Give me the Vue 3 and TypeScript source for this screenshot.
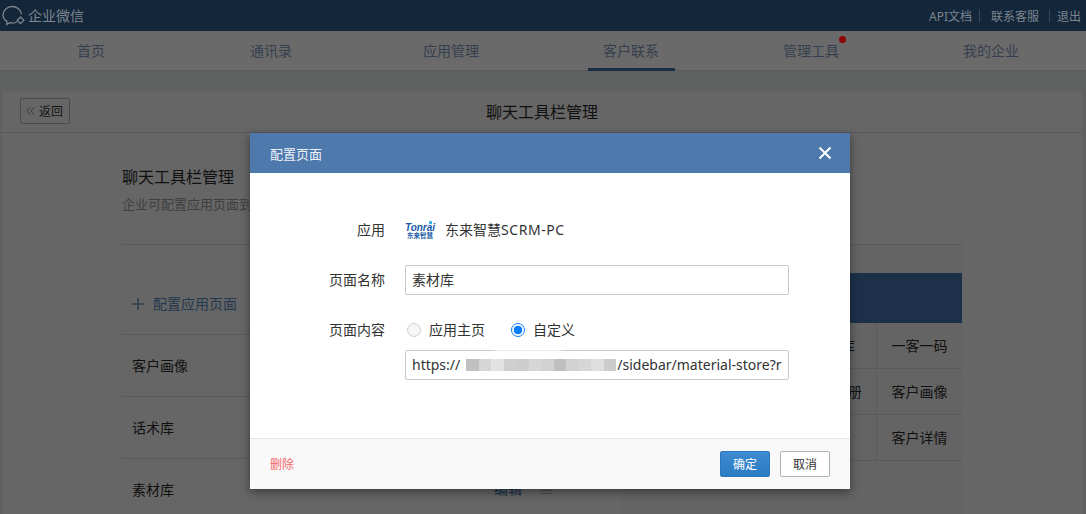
<script setup lang="ts">
const tabs: { name: string; active?: boolean; dot?: boolean }[] = [
  { name: '首页' },
  { name: '通讯录' },
  { name: '应用管理' },
  { name: '客户联系', active: true },
  { name: '管理工具', dot: true },
  { name: '我的企业' },
]
const rows: { name: string; edit?: boolean }[] = [
  { name: '客户画像' },
  { name: '话术库' },
  { name: '素材库', edit: true },
]
const cells: string[] = ['', '', '素材库', '一客一码', '', '', '产品图册', '客户画像', '', '', '', '客户详情']
const blocks: string[] = ['#c0c0c0', '#d6d6d6', '#e2e2e2', '#cfcfcf', '#cdcdcd', '#d6d6d6', '#d2d2d2', '#c0c0c0', '#d2d2d2', '#d6d6d6', '#dedede', '#cccccc']
</script>

<template>
  <div class="page">
    <header class="topbar">
      <div class="brand">
        <svg class="brand-icon" width="24" height="22" viewBox="0 0 24 22" fill="none" stroke="#7d8790" stroke-width="1.3">
          <path d="M15.300 16.700C13.800 17.600 12 18.100 10.200 18.100c-.9 0-1.800-.1-2.600-.4L4.700 19.600l.2-3.200C2.500 14.900 1 12.500 1 9.800 1 5.200 5.100 1.500 10.200 1.500c4.800 0 8.800 3.300 9.200 7.600" />
          <path d="M18.500 12l3.300 3.300-3.300 3.300-3.300-3.300z" />
        </svg>
        <span>企业微信</span>
      </div>
      <nav class="toplinks">
        <a>API文档</a><i></i><a>联系客服</a><i></i><a>退出</a>
      </nav>
    </header>

    <nav class="tabs">
      <div v-for="t in tabs" :key="t.name" class="tab" :class="{ active: t.active }">
        <span class="tab-label">{{ t.name }}<b v-if="t.dot" class="dot"></b></span>
      </div>
    </nav>

    <main class="card">
      <div class="card-head">
        <button class="back">
          <svg width="10" height="10" viewBox="0 0 10 10" fill="none" stroke="#3e3e3e" stroke-width="1">
            <path d="M4.500 1 1 5l3.500 4M8.500 1 5 5l3.500 4" />
          </svg>
          <span>返回</span>
        </button>
        <h1>聊天工具栏管理</h1>
      </div>
      <div class="content">
        <h2>聊天工具栏管理</h2>
        <p>企业可配置应用页面到聊天工具栏</p>
        <div class="columns">
          <section class="list">
            <div class="add">
              <svg width="12" height="12" viewBox="0 0 12 12" stroke="#2f3f52" stroke-width="1.600">
                <path d="M6 0v12M0 6h12" />
              </svg>
              <span>配置应用页面</span>
            </div>
            <div v-for="r in rows" :key="r.name" class="row">
              <span>{{ r.name }}</span>
              <span v-if="r.edit" class="row-tools">
                <span class="edit">编辑</span>
                <span class="handle"></span>
              </span>
            </div>
          </section>
          <section class="phone">
            <div class="phone-head"></div>
            <div class="grid">
              <div v-for="(c, i) in cells" :key="i" class="cell">{{ c }}</div>
            </div>
          </section>
        </div>
      </div>
    </main>

    <div class="modal">
      <div class="modal-head">
        <span>配置页面</span>
        <svg width="14" height="14" viewBox="0 0 14 14" stroke="#fff" stroke-width="2">
          <path d="M1.500 1.500l11 11M12.500 1.500l-11 11" />
        </svg>
      </div>
      <div class="modal-body">
        <div class="form-row">
          <label>应用</label>
          <div class="app">
            <div class="app-logo">
              <span class="logo-spark"></span>
              <span class="logo-en">Tonrai</span>
              <span class="logo-cn">东来智慧</span>
            </div>
            <span>东来智慧<span class="latin">SCRM-PC</span></span>
          </div>
        </div>
        <div class="form-row">
          <label>页面名称</label>
          <div class="input">素材库</div>
        </div>
        <div class="form-row content-row">
          <label>页面内容</label>
          <div class="field">
            <div class="radios">
              <label class="radio"><input type="radio" name="kind" /><span>应用主页</span></label>
              <label class="radio"><input type="radio" name="kind" checked /><span>自定义</span></label>
            </div>
            <div class="url-wrap">
              <div class="input url">
                <span>https://</span>
                <span class="mask">
                  <em v-for="(b, i) in blocks" :key="i" :style="{ background: b }"></em>
                </span>
                <span>/sidebar/material-store?r</span>
              </div>
              <span class="halo"></span>
            </div>
          </div>
        </div>
      </div>
      <div class="modal-foot">
        <a class="danger">删除</a>
        <div class="actions">
          <button class="btn primary">确定</button>
          <button class="btn">取消</button>
        </div>
      </div>
    </div>
  </div>
</template>

<style>
html, body { margin: 0; background: #5f6161; }
</style>

<style scoped>
.page {
  position: relative;
  width: 1086px;
  height: 514px;
  overflow: hidden;
  background: #5f6161;
  font-family: "Noto Sans", "Noto Sans CJK SC", sans-serif;
  font-size: 14px;
  color: #333;
}
.topbar {
  height: 31px;
  background: #14263a;
  display: flex;
  align-items: center;
  justify-content: space-between;
  padding: 0 5px 0 2px;
  box-sizing: border-box;
  color: #7c858e;
}
.brand { display: flex; align-items: center; gap: 2px; font-size: 14px; line-height: 20px; }
.brand-icon { flex: none; }
.toplinks { display: flex; align-items: center; font-size: 12px; }
.toplinks i { width: 1px; height: 13px; background: #3b4653; margin: 0 7px 0 7px; }
.toplinks i:nth-of-type(1) { margin-right: 11px; }
.toplinks i:nth-of-type(2) { margin-left: 10px; }
.tabs {
  height: 40px;
  display: flex;
  padding-left: 1px;
  background: #6a6a6a;
  border-bottom: 1px solid #5a5a5a;
  box-sizing: border-box;
}
.tab {
  width: 180px;
  flex: none;
  display: flex;
  justify-content: center;
  align-items: center;
  color: #363f4e;
  position: relative;
}
.tab.active::after {
  content: "";
  position: absolute;
  left: 47px;
  width: 87px;
  bottom: -1px;
  height: 3px;
  background: #1a2c46;
}
.tab-label { position: relative; line-height: 20px; }
.dot {
  position: absolute;
  right: -7px;
  top: -5px;
  width: 7px;
  height: 7px;
  border-radius: 50%;
  background: #8e0606;
}
.card {
  margin: 20px 4px 0 2px;
  height: 423px;
  background: #666;
  border-top: 1px solid #626363;
  box-sizing: border-box;
}
.card-head {
  height: 41px;
  border-bottom: 1px solid #585858;
  box-sizing: border-box;
  position: relative;
  display: flex;
  align-items: center;
  justify-content: center;
}
.card-head h1 {
  margin: 0;
  font-size: 16px;
  font-weight: 400;
  color: #111;
  line-height: 24px;
}
.back {
  position: absolute;
  left: 18px;
  top: 6px;
  width: 50px;
  height: 26px;
  padding: 0 0 0 5px;
  box-sizing: border-box;
  display: flex;
  align-items: center;
  gap: 3px;
  background: transparent;
  border: 1px solid #4c4c4c;
  border-radius: 2px;
  font: inherit;
  font-size: 12px;
  color: #141414;
}
.content { padding: 34px 120px 0; }
.content h2 {
  margin: 0;
  font-size: 16px;
  font-weight: 400;
  line-height: 20px;
  color: #111;
}
.content p {
  margin: 7px 0 0;
  font-size: 13px;
  line-height: 20px;
  color: #3f3f3f;
  padding-bottom: 30px;
  border-bottom: 1px solid #5a5a5a;
}
.columns { display: flex; }
.list { width: 500px; flex: none; }
.add {
  height: 90px;
  box-sizing: border-box;
  padding: 0 0 16px 10px;
  display: flex;
  align-items: flex-end;
  gap: 9px;
  border-bottom: 1px solid #5a5a5a;
  color: #24384e;
  line-height: 28px;
}
.add svg { margin-bottom: 8px; }
.row {
  height: 62px;
  padding: 0 70px 2px 10px;
  box-sizing: border-box;
  display: flex;
  align-items: center;
  justify-content: space-between;
  border-bottom: 1px solid #5a5a5a;
  color: #111;
}
.row-tools { display: flex; align-items: center; gap: 18px; }
.edit { color: #16304d; margin-bottom: 2px; }
.handle {
  width: 12px;
  height: 2px;
  margin-top: 6px;
  border-top: 1px solid #505050;
  border-bottom: 1px solid #505050;
}
.phone { width: 340px; flex: none; background: #646464; padding-top: 28px; }
.phone-head { height: 50px; background: #1d304a; }
.grid { display: grid; grid-template-columns: repeat(4, 85px); grid-auto-rows: 46px; }
.cell {
  display: flex;
  align-items: center;
  justify-content: center;
  padding-bottom: 2px;
  border-bottom: 1px solid #5a5a5a;
  border-right: 1px solid #5a5a5a;
  box-sizing: border-box;
  color: #111;
}
.cell:nth-child(4n) { border-right: 0; }

.modal {
  position: absolute;
  left: 250px;
  top: 133px;
  width: 600px;
  height: 356px;
  background: #fff;
  display: flex;
  flex-direction: column;
  box-shadow: 0 3px 9px rgba(0, 0, 0, .45);
}
.modal-head {
  height: 40px;
  flex: none;
  background: #4d79ad;
  display: flex;
  align-items: center;
  justify-content: space-between;
  padding: 0 18px 0 20px;
  color: #eef2f7;
  font-size: 13px;
}
.modal-body {
  flex: 1;
  padding-top: 42px;
  display: flex;
  flex-direction: column;
  box-sizing: border-box;
}
.form-row { display: flex; align-items: center; margin-bottom: 20px; }
.form-row > label {
  width: 135px;
  flex: none;
  text-align: right;
  margin-right: 20px;
  font-size: 14px;
  line-height: 20px;
  color: #333;
}
.app { display: flex; align-items: center; gap: 10px; font-size: 14px; line-height: 20px; color: #333; height: 30px; }
.latin { letter-spacing: .55px; }
.app-logo {
  position: relative;
  width: 30px;
  height: 30px;
  padding-top: 3px;
  box-sizing: border-box;
  display: flex;
  flex-direction: column;
  align-items: center;
  justify-content: center;
  line-height: 1;
  color: #1a5aa8;
}
.logo-spark {
  position: absolute;
  right: 3px;
  top: 6px;
  width: 3px;
  height: 3px;
  background: #39b6e8;
}
.logo-en { font-size: 10px; font-weight: 700; font-style: italic; font-family: "Liberation Sans", sans-serif; line-height: 9px; }
.logo-cn { font-size: 6.500px; font-weight: 700; line-height: 8px; }
.input {
  width: 384px;
  height: 30px;
  box-sizing: border-box;
  border: 1px solid #c8c8c8;
  border-radius: 2px;
  padding: 0 6px;
  display: flex;
  align-items: center;
  font-size: 14px;
  line-height: 20px;
  color: #333;
  white-space: nowrap;
  overflow: hidden;
}
.content-row { align-items: flex-start; margin: 5px 0 0; }
.radios { display: flex; height: 20px; align-items: center; gap: 26px; padding-left: 2px; margin-bottom: 10px; }
.radio { display: flex; align-items: center; gap: 8px; font-size: 14px; line-height: 20px; color: #333; }
.radio input {
  appearance: none;
  width: 14px;
  height: 14px;
  margin: 0;
  border: 1px solid #d0d0d0;
  border-radius: 50%;
  background: #f6f6f6;
  box-sizing: border-box;
}
.radio input:checked {
  border-color: #0a7cff;
  background: radial-gradient(circle, #0a7cff 0 4px, #fff 4.600px);
}
.url-wrap { position: relative; }
.mask { display: inline-flex; height: 12px; margin: 0 1px 0 6px; flex: none; }
.mask em { width: 12.500px; display: block; filter: blur(.5px); }
.halo {
  position: absolute;
  left: 90px;
  top: -3px;
  width: 66px;
  height: 6px;
  background: #fff;
  filter: blur(2px);
  opacity: .8;
}
.modal-foot {
  height: 51px;
  flex: none;
  box-sizing: border-box;
  background: #f9f9f9;
  border-top: 1px solid #e6e6e6;
  display: flex;
  align-items: center;
  justify-content: space-between;
  padding: 0 20px;
}
.danger { color: #f5636b; font-size: 12px; }
.actions { display: flex; gap: 10px; }
.btn {
  width: 50px;
  height: 26px;
  box-sizing: border-box;
  padding: 0;
  border: 1px solid #b2b2b2;
  border-radius: 2px;
  background: #fff;
  font: inherit;
  font-size: 12px;
  color: #333;
}
.btn.primary {
  background: linear-gradient(#3d8bd0, #2c7cc3);
  border-color: #2a77bd;
  color: #fff;
}
</style>
